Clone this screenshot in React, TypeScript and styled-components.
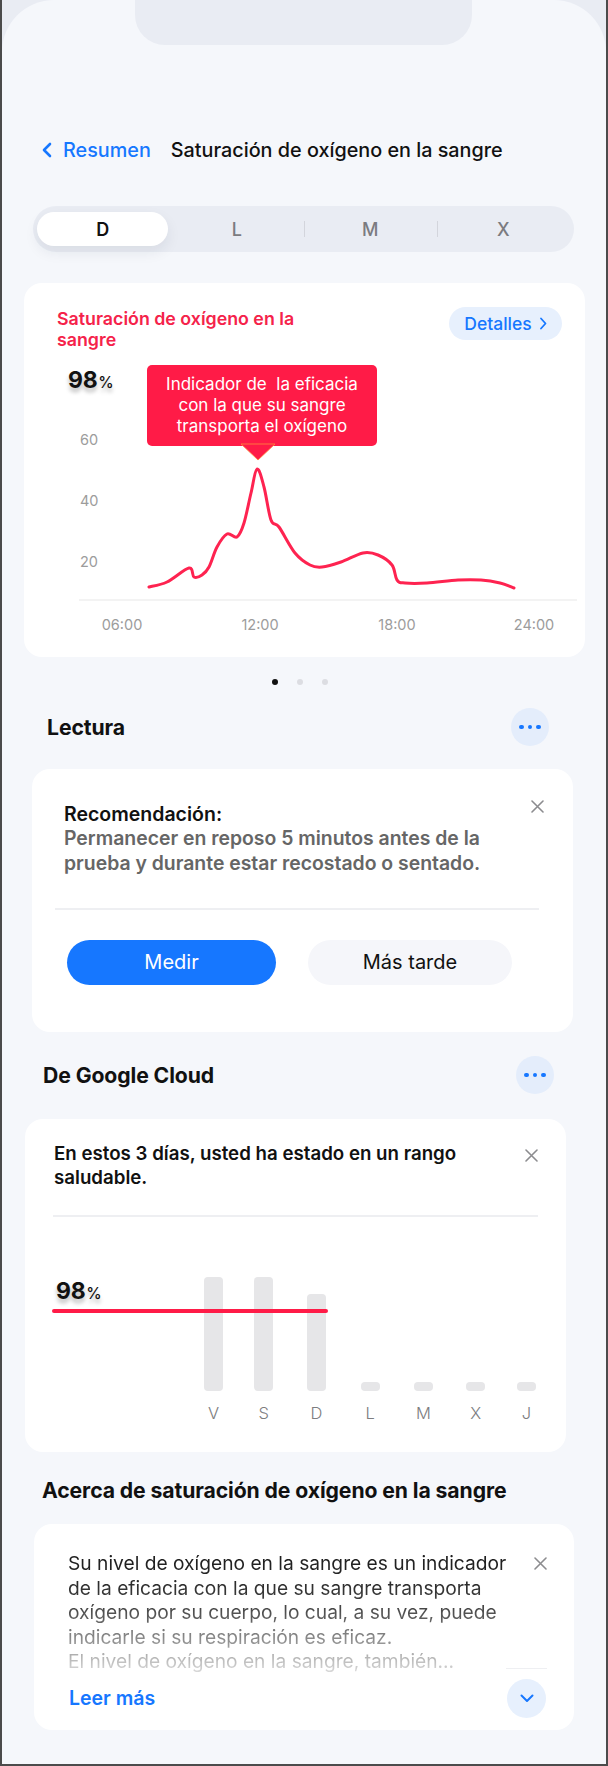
import React from "react";
import styled, { createGlobalStyle, css } from "styled-components";

const GlobalStyle = createGlobalStyle`
  html, body { margin: 0; padding: 0; background: #e9ecf3; }
  body { font-family: Inter, "Noto Sans", sans-serif; -webkit-font-smoothing: antialiased; }
  * { box-sizing: border-box; }
`;

const Frame = styled.div`
  width: 608px;
  height: 1766px;
  border: 2px solid #4b4b4b;
  border-top: none;
  background: #e9ecf3;
  overflow: hidden;
`;

const Screen = styled.div`
  height: 100%;
  background: #f5f7fb;
  border-radius: 52px 52px 0 0;
  display: flex;
  flex-direction: column;
`;

const Notch = styled.div`
  margin-left: 133px;
  width: 337px;
  height: 45px;
  background: #e9ecf3;
  border-radius: 0 0 30px 30px;
  flex-shrink: 0;
`;

const NavBar = styled.div`
  margin: 93px 0 0 39px;
  height: 24px;
  display: flex;
  align-items: center;
`;

const BackLink = styled.div`
  display: flex;
  align-items: center;
  gap: 10px;
  color: #1677ff;
  font-size: 19.8px;
  font-weight: 500;
`;

const NavTitle = styled.div`
  margin-left: 20px;
  font-size: 19.8px;
  font-weight: 500;
  color: #111;
`;

const Segmented = styled.div`
  margin: 44px 0 0 31px;
  width: 541px;
  height: 46px;
  padding: 6px 4px;
  background: #e9ecf3;
  border-radius: 23px;
  display: grid;
  grid-template-columns: repeat(4, 1fr);
  flex-shrink: 0;
`;

const Segment = styled.div<{ $active?: boolean; $divider?: boolean }>`
  position: relative;
  display: flex;
  align-items: center;
  justify-content: center;
  border-radius: 18px;
  font-size: 18px;
  font-weight: ${(p) => (p.$active ? 600 : 500)};
  color: ${(p) => (p.$active ? "#111" : "#7b7b80")};
  background: ${(p) => (p.$active ? "#fff" : "transparent")};
  box-shadow: ${(p) => (p.$active ? "0 6px 14px rgba(30, 40, 70, 0.08)" : "none")};
  margin-right: ${(p) => (p.$active ? "2px" : "0")};
  ${(p) =>
    p.$divider &&
    css`
      &::before {
        content: "";
        position: absolute;
        left: 0;
        top: 9px;
        bottom: 9px;
        width: 1.5px;
        background: #d3d5dc;
      }
    `}
`;

const Card = styled.div<{ $mt: number; $ml: number; $w: number; $h: number }>`
  margin-top: ${(p) => p.$mt}px;
  margin-left: ${(p) => p.$ml}px;
  width: ${(p) => p.$w}px;
  height: ${(p) => p.$h}px;
  background: #fff;
  border-radius: 18px;
  flex-shrink: 0;
  display: flex;
  flex-direction: column;
`;

const ChartHeader = styled.div`
  display: flex;
  justify-content: space-between;
  align-items: flex-start;
  padding: 24px 23px 0 33px;
`;

const RedTitle = styled.div`
  margin-top: 1px;
  font-size: 17.8px;
  font-weight: 600;
  line-height: 21px;
  color: #f5224a;
`;

const PillButton = styled.div`
  width: 113px;
  height: 33px;
  border-radius: 17px;
  background: #e7f0fd;
  color: #1677ff;
  font-size: 17.5px;
  font-weight: 500;
  display: flex;
  align-items: center;
  justify-content: center;
  gap: 7px;
`;

const ChartWrap = styled.div`
  position: relative;
  margin-top: 5px;
  height: 302px;
`;

const ChartSvg = styled.svg`
  display: block;
`;

const Value = styled.div`
  display: flex;
  align-items: baseline;
  color: #111;
  line-height: 22px;
  text-shadow: 0 4px 4px rgba(0, 0, 0, 0.28);
`;

const ValueNum = styled.span`
  font-size: 23px;
  font-weight: 700;
  letter-spacing: -0.3px;
`;

const ValueUnit = styled.span`
  font-size: 15.5px;
  font-weight: 500;
  margin-left: 1px;
`;

const ChartValue = styled(Value)`
  position: absolute;
  left: 44px;
  top: 14px;
`;

const Tooltip = styled.div`
  position: absolute;
  left: 123px;
  top: 10px;
  width: 230px;
  height: 81px;
  background: #ff1b47;
  border-radius: 5px;
  color: #fff;
  font-size: 17px;
  line-height: 21px;
  text-align: center;
  padding-top: 9px;
`;

const TooltipArrow = styled.svg`
  position: absolute;
  left: 93px;
  top: 78px;
`;

const Dots = styled.div`
  margin-top: 22px;
  height: 6px;
  display: flex;
  gap: 19px;
  justify-content: center;
  padding-right: 8px;
`;

const Dot = styled.span<{ $active?: boolean }>`
  width: 6px;
  height: 6px;
  border-radius: 50%;
  background: ${(p) => (p.$active ? "#111" : "#dcdde2")};
`;

const SectionHeader = styled.div<{ $mt: number; $ml: number; $mr: number; $h: number }>`
  margin: ${(p) => `${p.$mt}px ${p.$mr}px 0 ${p.$ml}px`};
  height: ${(p) => p.$h}px;
  display: flex;
  align-items: center;
  justify-content: space-between;
  flex-shrink: 0;
`;

const SectionTitle = styled.div`
  font-size: 21.2px;
  font-weight: 700;
  color: #111;
  letter-spacing: -0.1px;
`;

const MoreButton = styled.div`
  width: 38px;
  height: 38px;
  border-radius: 50%;
  background: #e4edfb;
  display: flex;
  align-items: center;
  justify-content: center;
  gap: 4px;
`;

const MoreDot = styled.span`
  width: 4.5px;
  height: 4.5px;
  border-radius: 50%;
  background: #1677ff;
`;

const MessageRow = styled.div<{ $pt: number; $pl: number; $pr: number }>`
  display: flex;
  justify-content: space-between;
  align-items: flex-start;
  padding: ${(p) => `${p.$pt}px ${p.$pr}px 0 ${p.$pl}px`};
`;

const MessageTitle = styled.div<{ $size: number }>`
  font-size: ${(p) => p.$size}px;
  font-weight: 600;
  line-height: 24px;
  color: #111;
  white-space: nowrap;
`;

const MessageBody = styled.div`
  font-size: 19.4px;
  font-weight: 600;
  line-height: 25px;
  color: #666;
  white-space: nowrap;
`;

const CloseIcon = styled.svg<{ $mt: number }>`
  flex-shrink: 0;
  margin-top: ${(p) => p.$mt}px;
`;

const Divider = styled.div<{ $mt: number; $ml: number; $w: number }>`
  margin-top: ${(p) => p.$mt}px;
  margin-left: ${(p) => p.$ml}px;
  width: ${(p) => p.$w}px;
  height: 1.5px;
  background: #eeeff2;
`;

const ButtonRow = styled.div`
  margin: 30px 0 0 35px;
  display: flex;
  gap: 32px;
`;

const ActionButton = styled.div<{ $primary?: boolean; $w: number }>`
  width: ${(p) => p.$w}px;
  height: 45px;
  border-radius: 23px;
  background: ${(p) => (p.$primary ? "#1677ff" : "#f5f6fa")};
  color: ${(p) => (p.$primary ? "#fff" : "#111")};
  font-size: 20px;
  font-weight: 400;
  display: flex;
  align-items: center;
  justify-content: center;
`;

const BarSection = styled.div`
  position: relative;
  margin-top: 51px;
`;

const BarGrid = styled.div`
  margin-left: 164px;
  display: grid;
  grid-template-columns: 49px 51.5px 54px 53.5px 53px 51.5px 50px;
  grid-template-rows: 123px auto;
  justify-items: center;
`;

const Bar = styled.div`
  align-self: end;
  width: 19px;
  border-radius: 4px;
  background: #e6e6e8;
`;

const BarLabel = styled.div`
  margin-top: 12px;
  font-size: 16.5px;
  line-height: 20px;
  font-weight: 300;
  color: #7d7d80;
`;

const BarValue = styled(Value)`
  position: absolute;
  left: 31px;
  top: 12px;
`;

const TargetLine = styled.div`
  position: absolute;
  left: 27px;
  top: 41px;
  width: 276px;
  height: 4px;
  border-radius: 2px;
  background: #ff1b47;
`;

const AboutText = styled.div`
  font-size: 19.2px;
  line-height: 24.5px;
  font-weight: 400;
  background: linear-gradient(
    to bottom,
    #1c1c1c 0%,
    #262626 22%,
    #4a4a4a 48%,
    #8d8d8d 72%,
    #dcdcdc 100%
  );
  -webkit-background-clip: text;
  background-clip: text;
  color: transparent;
`;

const AboutLine = styled.span`
  display: block;
  white-space: nowrap;
`;

const SideColumn = styled.div`
  width: 41px;
  height: 118px;
  display: flex;
  flex-direction: column;
  align-items: flex-end;
  justify-content: space-between;
  padding-top: 6px;
`;

const ShortRule = styled.div`
  width: 41px;
  height: 1.5px;
  background: #eeeff2;
`;

const Footer = styled.div`
  margin: 5px 28px 0 35px;
  display: flex;
  justify-content: space-between;
  align-items: center;
`;

const ReadMore = styled.div`
  font-size: 19.5px;
  font-weight: 600;
  color: #1677ff;
`;

const RoundIcon = styled.div`
  width: 39px;
  height: 39px;
  border-radius: 50%;
  background: #e7f0fd;
  display: flex;
  align-items: center;
  justify-content: center;
`;

type Pt = [number, number];

function smoothPath(pts: Pt[]): string {
  let d = `M${pts[0][0]},${pts[0][1]}`;
  for (let i = 0; i < pts.length - 1; i++) {
    const p0 = pts[i - 1] || pts[i];
    const p1 = pts[i];
    const p2 = pts[i + 1];
    const p3 = pts[i + 2] || p2;
    const t = 6;
    const c1x = p1[0] + (p2[0] - p0[0]) / t;
    const c1y = p1[1] + (p2[1] - p0[1]) / t;
    const c2x = p2[0] - (p3[0] - p1[0]) / t;
    const c2y = p2[1] - (p3[1] - p1[1]) / t;
    d += ` C${c1x.toFixed(1)},${c1y.toFixed(1)} ${c2x.toFixed(1)},${c2y.toFixed(1)} ${p2[0]},${p2[1]}`;
  }
  return d;
}

const curve: Pt[] = [
  [125, 232],
  [143, 227],
  [165, 213],
  [170, 222],
  [178, 220],
  [185, 212],
  [193, 192],
  [203, 179],
  [213, 182],
  [220, 168],
  [227, 138],
  [233, 114],
  [240, 132],
  [247, 165],
  [255, 172],
  [271, 198],
  [286, 210],
  [298, 212],
  [317, 207],
  [339, 198],
  [354, 200],
  [368, 210],
  [373, 225],
  [381, 228],
  [403, 228],
  [434, 225],
  [457, 225],
  [476, 228],
  [490, 233],
];

const Close = ({ mt }: { mt: number }) => (
  <CloseIcon $mt={mt} width="13" height="13" viewBox="0 0 13 13">
    <path d="M1 1L12 12M12 1L1 12" stroke="#8c8c8f" strokeWidth="1.6" strokeLinecap="round" />
  </CloseIcon>
);

const More = () => (
  <MoreButton>
    <MoreDot />
    <MoreDot />
    <MoreDot />
  </MoreButton>
);

const bars = [
  { d: "V", h: 114 },
  { d: "S", h: 114 },
  { d: "D", h: 97 },
  { d: "L", h: 9 },
  { d: "M", h: 9 },
  { d: "X", h: 9 },
  { d: "J", h: 9 },
];

export default function App() {
  return (
    <>
      <GlobalStyle />
      <Frame>
        <Screen>
          <Notch />
          <NavBar>
            <BackLink>
              <svg width="12" height="16" viewBox="0 0 12 16">
                <polyline
                  points="9,2 3,8 9,14"
                  fill="none"
                  stroke="#1677ff"
                  strokeWidth="2.6"
                  strokeLinecap="round"
                  strokeLinejoin="round"
                />
              </svg>
              Resumen
            </BackLink>
            <NavTitle>Saturación de oxígeno en la sangre</NavTitle>
          </NavBar>

          <Segmented>
            <Segment $active>D</Segment>
            <Segment>L</Segment>
            <Segment $divider>M</Segment>
            <Segment $divider>X</Segment>
          </Segmented>

          <Card $mt={31} $ml={22} $w={561} $h={374}>
            <ChartHeader>
              <RedTitle>
                Saturación de oxígeno en la
                <br />
                sangre
              </RedTitle>
              <PillButton>
                Detalles
                <svg width="8" height="13" viewBox="0 0 8 13">
                  <polyline
                    points="2,1.5 6.5,6.5 2,11.5"
                    fill="none"
                    stroke="#1677ff"
                    strokeWidth="1.8"
                    strokeLinecap="round"
                    strokeLinejoin="round"
                  />
                </svg>
              </PillButton>
            </ChartHeader>
            <ChartWrap>
              <ChartSvg width="561" height="302" viewBox="0 0 561 302">
                <line x1="55" y1="245" x2="553" y2="245" stroke="#efefef" strokeWidth="1.5" />
                <g fontFamily="Inter, sans-serif" fontSize="14.5" fill="#9c9c9c">
                  <text x="56" y="86" dominantBaseline="middle">60</text>
                  <text x="56" y="147" dominantBaseline="middle">40</text>
                  <text x="56" y="208" dominantBaseline="middle">20</text>
                  <text x="98" y="271" textAnchor="middle" dominantBaseline="middle">06:00</text>
                  <text x="236" y="271" textAnchor="middle" dominantBaseline="middle">12:00</text>
                  <text x="373" y="271" textAnchor="middle" dominantBaseline="middle">18:00</text>
                  <text x="510" y="271" textAnchor="middle" dominantBaseline="middle">24:00</text>
                </g>
                <path
                  d={smoothPath(curve)}
                  fill="none"
                  stroke="#fe2350"
                  strokeWidth="3"
                  strokeLinecap="round"
                  strokeLinejoin="round"
                />
              </ChartSvg>
              <ChartValue>
                <ValueNum>98</ValueNum>
                <ValueUnit>%</ValueUnit>
              </ChartValue>
              <Tooltip>
                Indicador de&nbsp; la eficacia
                <br />
                con la que su sangre
                <br />
                transporta el oxígeno
                <TooltipArrow width="36" height="19" viewBox="0 0 36 19">
                  <polygon points="1,1 35,1 18,17" fill="#ff1b47" stroke="#ff8a3c" strokeWidth="0.8" />
                </TooltipArrow>
              </Tooltip>
            </ChartWrap>
          </Card>

          <Dots>
            <Dot $active />
            <Dot />
            <Dot />
          </Dots>

          <SectionHeader $mt={23} $ml={45} $mr={57} $h={38}>
            <SectionTitle>Lectura</SectionTitle>
            <More />
          </SectionHeader>

          <Card $mt={23} $ml={30} $w={541} $h={263}>
            <MessageRow $pt={33} $pl={32} $pr={29}>
              <div>
                <MessageTitle $size={19.5}>Recomendación:</MessageTitle>
                <MessageBody>
                  Permanecer en reposo 5 minutos antes de la
                  <br />
                  prueba y durante estar recostado o sentado.
                </MessageBody>
              </div>
              <Close mt={-2} />
            </MessageRow>
            <Divider $mt={32} $ml={23} $w={484} />
            <ButtonRow>
              <ActionButton $primary $w={209}>
                Medir
              </ActionButton>
              <ActionButton $w={204}>Más tarde</ActionButton>
            </ButtonRow>
          </Card>

          <SectionHeader $mt={24} $ml={41} $mr={52} $h={38}>
            <SectionTitle>De Google Cloud</SectionTitle>
            <More />
          </SectionHeader>

          <Card $mt={25} $ml={23} $w={541} $h={333}>
            <MessageRow $pt={23} $pl={29} $pr={28}>
              <MessageTitle $size={18.7}>
                En estos 3 días, usted ha estado en un rango
                <br />
                saludable.
              </MessageTitle>
              <Close mt={7} />
            </MessageRow>
            <Divider $mt={25} $ml={28} $w={485} />
            <BarSection>
              <BarGrid>
                {bars.map((b) => (
                  <Bar key={b.d} style={{ height: b.h }} />
                ))}
                {bars.map((b) => (
                  <BarLabel key={b.d + "l"}>{b.d}</BarLabel>
                ))}
              </BarGrid>
              <BarValue>
                <ValueNum>98</ValueNum>
                <ValueUnit>%</ValueUnit>
              </BarValue>
              <TargetLine />
            </BarSection>
          </Card>

          <SectionHeader $mt={26} $ml={40} $mr={40} $h={24}>
            <SectionTitle>Acerca de saturación de oxígeno en la sangre</SectionTitle>
          </SectionHeader>

          <Card $mt={22} $ml={32} $w={540} $h={206}>
            <MessageRow $pt={27} $pl={34} $pr={28}>
              <AboutText>
                <AboutLine>Su nivel de oxígeno en la sangre es un indicador</AboutLine>
                <AboutLine>de la eficacia con la que su sangre transporta</AboutLine>
                <AboutLine>oxígeno por su cuerpo, lo cual, a su vez, puede</AboutLine>
                <AboutLine>indicarle si su respiración es eficaz.</AboutLine>
                <AboutLine>El nivel de oxígeno en la sangre, también...</AboutLine>
              </AboutText>
              <SideColumn>
                <svg width="13" height="13" viewBox="0 0 13 13">
                  <path d="M1 1L12 12M12 1L1 12" stroke="#8c8c8f" strokeWidth="1.6" strokeLinecap="round" />
                </svg>
                <ShortRule />
              </SideColumn>
            </MessageRow>
            <Footer>
              <ReadMore>Leer más</ReadMore>
              <RoundIcon>
                <svg width="14" height="9" viewBox="0 0 14 9">
                  <polyline
                    points="1.5,1.5 7,7 12.5,1.5"
                    fill="none"
                    stroke="#1677ff"
                    strokeWidth="2"
                    strokeLinecap="round"
                    strokeLinejoin="round"
                  />
                </svg>
              </RoundIcon>
            </Footer>
          </Card>
        </Screen>
      </Frame>
    </>
  );
}
